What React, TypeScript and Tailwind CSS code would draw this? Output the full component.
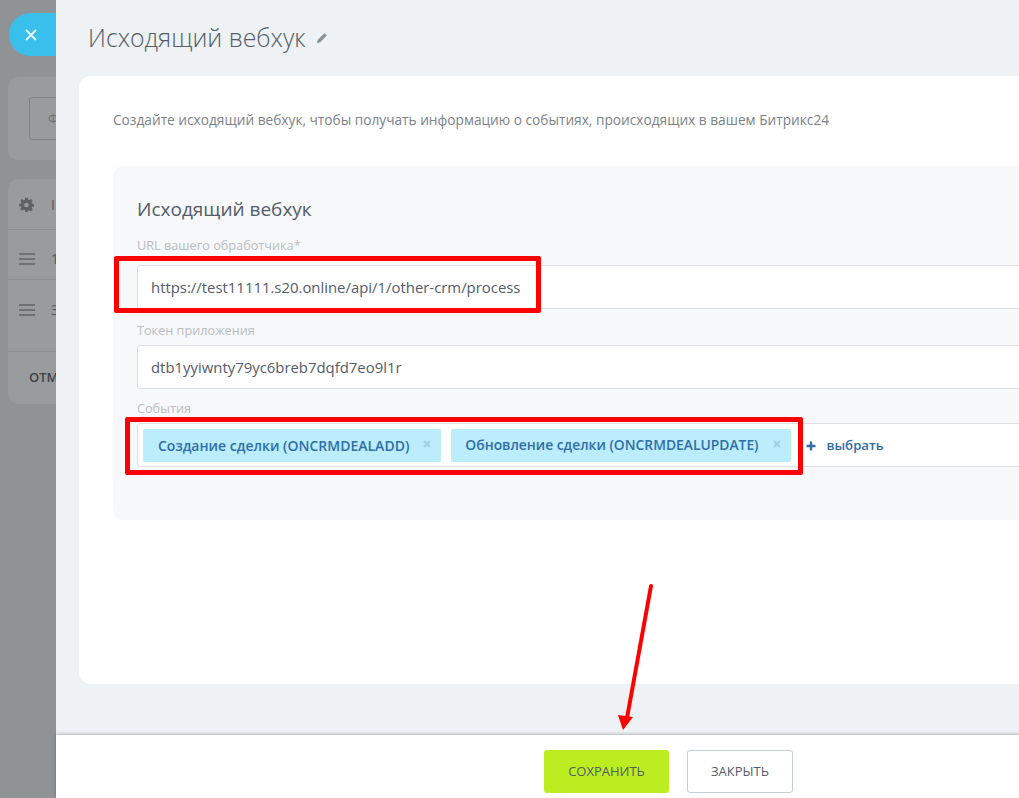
import React from "react";

const font = { fontFamily: '"Open Sans", "Noto Sans", sans-serif' };

function Hamburger() {
  return (
    <svg width="16" height="12" viewBox="0 0 16 12" className="shrink-0">
      <rect x="0" y="0" width="16" height="2" fill="#6f7275" />
      <rect x="0" y="5" width="16" height="2" fill="#6f7275" />
      <rect x="0" y="10" width="16" height="2" fill="#6f7275" />
    </svg>
  );
}

function Gear() {
  return (
    <svg width="15" height="15" viewBox="0 0 24 24" className="shrink-0">
      <path
        fill="#5f6265"
        fillRule="evenodd"
        d="M10 1h4l.6 3.2 1.9.8 2.7-1.9 2.8 2.8-1.9 2.7.8 1.9L24 11v4l-3.1.6-.8 1.9 1.9 2.7-2.8 2.8-2.7-1.9-1.9.8L14 24h-4l-.6-3.1-1.9-.8-2.7 1.9-2.8-2.8 1.9-2.7-.8-1.9L0 15v-4l3.1-.5.8-1.9L2 5.9l2.8-2.8 2.7 1.9 1.9-.8L10 1zm2 8a3.6 3.6 0 1 0 0 7.2A3.6 3.6 0 0 0 12 9z"
      />
    </svg>
  );
}

function Tag({ label, className, textClass }: { label: string; className: string; textClass: string }) {
  return (
    <div className={"flex h-[33px] items-center rounded-[2px] bg-[#bbedfc] " + className}>
      <span className={"whitespace-nowrap font-semibold text-[#2f6ea8] " + textClass}>{label}</span>
      <svg width="8" height="8" viewBox="0 0 8 8" className="ml-[14px] mb-[2px]">
        <path d="M1 1l6 6M7 1L1 7" stroke="#a3cfe0" strokeWidth="2" />
      </svg>
    </div>
  );
}

export default function App() {
  return (
    <div className="relative flex h-[798px] w-[1019px] overflow-hidden bg-[#909396]" style={font}>
      {/* page behind the slider */}
      <div className="w-[56px] shrink-0 overflow-hidden">
        <div className="ml-[9px] mt-[13px] flex h-[43px] w-[70px] items-center rounded-l-[22px] bg-[#39bfec] pl-[15px]">
          <svg width="14" height="14" viewBox="0 0 14 14">
            <path d="M2 2l10 10M12 2L2 12" stroke="#e8f8fd" strokeWidth="1.8" />
          </svg>
        </div>
        <div className="ml-[8px] mt-[21px] h-[83px] w-[80px] rounded-[10px] bg-[#999c9f] pl-[21px] pt-[20px]">
          <div className="flex h-[43px] w-[60px] items-center rounded-[3px] border border-[#7e8184] pl-[18px] text-[13px] text-[#6e7174]">
            Ф
          </div>
        </div>
        <div className="ml-[8px] mt-[19px] h-[225px] w-[80px] rounded-[10px] bg-[#999c9f]">
          <div className="flex h-[51px] items-center gap-[17px] border-b border-[#8a8d90] pl-[11px]">
            <Gear />
            <span className="text-[14px] text-[#55585b]">I</span>
          </div>
          <div className="flex h-[50px] items-center gap-[16px] border-b border-[#8a8d90] pl-[11px] pt-[8px]">
            <Hamburger />
            <span className="text-[14px] text-[#55585b]">1</span>
          </div>
          <div className="flex h-[72px] items-start gap-[16px] border-b border-[#8a8d90] pl-[11px] pt-[21px]">
            <div className="pt-[3px]">
              <Hamburger />
            </div>
            <span className="text-[14px] leading-[18px] text-[#55585b]">З</span>
          </div>
          <div className="pl-[21px] pt-[16px] text-[13px] font-semibold leading-[18px] text-[#3f4245]">ОТМ</div>
        </div>
      </div>

      {/* slider */}
      <div className="flex min-w-0 flex-1 flex-col bg-[#eef2f4]">
        <div className="flex h-[76px] shrink-0 items-start pl-[32px] pt-[19px]">
          <h1 className="text-[24.8px] font-light leading-[36px] text-[#535c69]">Исходящий вебхук</h1>
          <svg width="12" height="12" viewBox="0 0 12 12" className="ml-[10px] mt-[13px]">
            <path d="M1 11l.6-3L8.4 1.2l2.4 2.4L4 10.4 1 11z" fill="#8b9196" />
          </svg>
        </div>

        <div className="ml-[23px] mr-[-40px] h-[608px] shrink-0 rounded-[12px] bg-white pl-[34px] pt-[35px]">
          <p className="h-[55px] whitespace-nowrap text-[13.7px] leading-[18px] text-[#7b8288]">
            Создайте исходящий вебхук, чтобы получать информацию о событиях, происходящих в вашем Битрикс24
          </p>
          <div className="h-[354px] rounded-[10px] bg-[#f7f8fa] pl-[24px] pt-[30px]">
            <h2 className="h-[40px] text-[19px] font-normal leading-[26px] text-[#535c69]">Исходящий вебхук</h2>
            <div className="h-[29px] text-[12.7px] leading-[18px] text-[#b9bdc1]">URL вашего обработчика*</div>
            <div className="flex h-[44px] items-center rounded-[3px] border border-[#dcdfe3] bg-white pl-[13px] text-[14.9px] text-[#535c69]">
              https://test11111.s20.online/api/1/other-crm/process
            </div>
            <div className="mt-[12px] h-[24px] text-[12.7px] leading-[18px] text-[#b9bdc1]">Токен приложения</div>
            <div className="flex h-[44px] items-center rounded-[3px] border border-[#dcdfe3] bg-white pl-[13px] text-[14.9px] text-[#535c69]">
              dtb1yyiwnty79yc6breb7dqfd7eo9l1r
            </div>
            <div className="mt-[10px] h-[24px] text-[12.7px] leading-[18px] text-[#b9bdc1]">События</div>
            <div className="flex h-[44px] items-center gap-[10px] rounded-[3px] border border-[#dcdfe3] bg-white pl-[5px]">
              <Tag label="Создание сделки (ONCRMDEALADD)" className="pl-[15px] pr-[10px]" textClass="text-[14px]" />
              <Tag label="Обновление сделки (ONCRMDEALUPDATE)" className="pl-[14px] pr-[10px]" textClass="text-[13.85px]" />
              <svg width="10" height="10" viewBox="0 0 10 10" className="ml-[5px] mt-[1px]">
                <path d="M5 0.5v9M0.5 5h9" stroke="#2f6ea8" strokeWidth="2.4" />
              </svg>
              <span className="ml-[1px] mt-[2px] text-[13.2px] font-semibold text-[#2f6ea8]">выбрать</span>
            </div>
          </div>
        </div>

        <div className="mt-[51px] flex flex-1 items-start justify-center gap-[18px] bg-white pl-[262px] pt-[15px] shadow-[0_-1px_3px_rgba(0,0,0,0.25)]">
          <button className="h-[43px] w-[125px] rounded-[3px] bg-[#bbed21] text-[13px] font-medium text-[#535c69]">
            СОХРАНИТЬ
          </button>
          <button className="h-[43px] w-[106px] rounded-[3px] border border-[#c6cdd3] bg-white text-[13px] font-medium text-[#535c69]">
            ЗАКРЫТЬ
          </button>
        </div>
      </div>

      {/* red annotations */}
      <div className="absolute left-[114px] top-[256px] h-[57px] w-[427px] rounded-[2px] border-[5px] border-[#fe0000]" />
      <div className="absolute left-[125px] top-[417px] h-[58px] w-[678px] rounded-[2px] border-[5px] border-[#fe0000]" />
      <svg className="absolute left-[610px] top-[580px]" width="50" height="155" viewBox="0 0 50 155">
        <path d="M41 6L17 138" stroke="#fe0000" strokeWidth="4" strokeLinecap="round" />
        <path d="M8 135L23 137L13 150z" fill="#fe0000" />
      </svg>
    </div>
  );
}
